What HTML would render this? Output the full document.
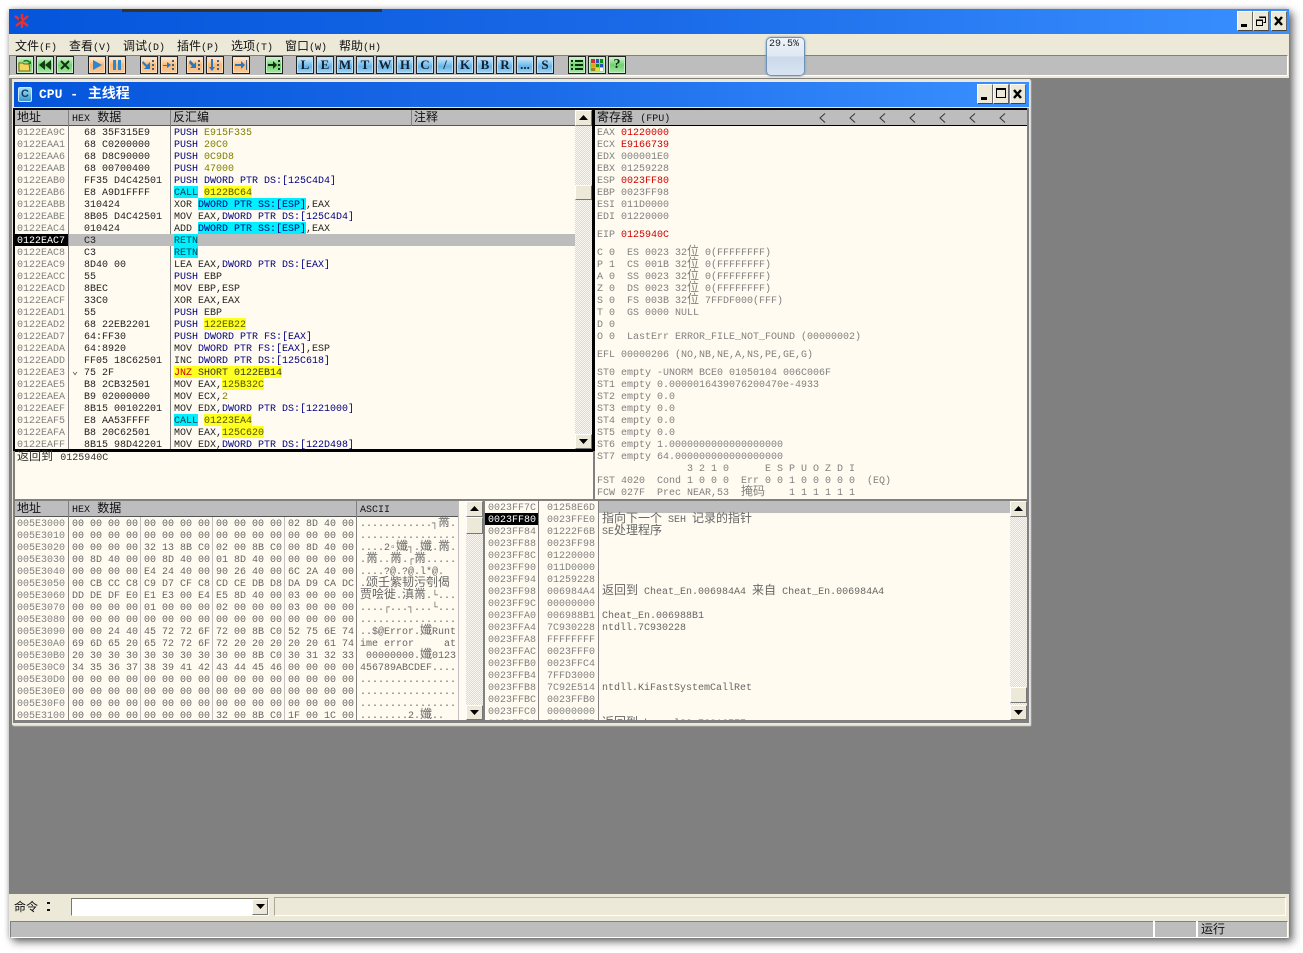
<!DOCTYPE html>
<html><head><meta charset="utf-8"><title>CPU</title>
<style>
html,body{margin:0;padding:0;width:1303px;height:953px;overflow:hidden;background:#fff}
div,pre,svg{position:absolute;margin:0;padding:0}
pre,.t{font:10px/12px "Liberation Mono",monospace;white-space:pre;color:#333}
pre{padding-top:2px}
i{font:normal 12px/0 "Noto Sans CJK SC","WenQuanYi Zen Hei",sans-serif;letter-spacing:0}
.m{font:12px/14px "Noto Sans CJK SC","WenQuanYi Zen Hei",sans-serif;color:#111;white-space:pre}
.m u{font:10px/12px "Liberation Mono",monospace;text-decoration:none}
.h{background:#bdbdbd;height:15px;border-bottom:1px solid #555;box-sizing:content-box}
.ht{font:12px/15px "Liberation Mono","Noto Sans CJK SC",monospace;color:#111;white-space:pre}
.ht b{font:normal 10px/15px "Liberation Mono",monospace}
.v{width:1px;background:#808080}
.g{color:#808080}
.n{color:#000080}
.o{color:#808000}
.r{color:#d00000}
.c{background:#00f0ff;color:#004050;display:inline-block;height:10px;box-shadow:0 -2px 0 #00f0ff}
.y{background:#ffff20;display:inline-block;height:10px;box-shadow:0 -2px 0 #ffff20}
.cn{background:#00f0ff;color:#000080;display:inline-block;height:10px;box-shadow:0 -2px 0 #00f0ff}
.sb{width:16px;background:#ece9d8;border:1px solid;border-color:#fff #777 #777 #fff;box-sizing:border-box}
.tr{background:repeating-conic-gradient(#f8f6ee 0 25%,#dedcd0 0 50%) 0 0/2px 2px}
.w{width:16px;height:20px;background:#ece9d8;border:1px solid;border-color:#fff #666 #444 #fff;box-sizing:border-box}
.tb{width:18px;height:18px;box-sizing:border-box;border:1px solid #222;top:56px}
.to{background:linear-gradient(#fff0e0,#f8b878 50%,#f8c898);box-shadow:inset 0 0 0 1px #fbdcbc}
.tg{background:linear-gradient(#d8f8d8,#70d070 50%,#a8e8a8);box-shadow:inset 0 0 0 1px #c8f0c8}
.tl{background:linear-gradient(#d8effc,#68b4e8 60%,#a0d4f4);box-shadow:inset 0 0 0 1px #b8e0f8;font:bold 13px/16px "Liberation Serif",serif;color:#123;text-align:center}
.tb svg{left:0;top:0}
</style></head><body>

<!-- main window -->
<div style="left:9px;top:9px;width:1280px;height:929px;background:#ece9d8;box-shadow:4px 4px 8px rgba(0,0,0,.55),0 0 5px rgba(0,0,0,.25)"></div>
<div style="left:9px;top:9px;width:1280px;height:25px;background:linear-gradient(90deg,#0555dc,#1a6ae8 50%,#3a90ff)"></div>
<div style="left:122px;top:9px;width:260px;height:3px;background:#333"></div>
<svg style="left:13px;top:13px" width="18" height="17" viewBox="0 0 18 17"><g stroke="#e83030" stroke-width="2.4" fill="none"><path d="M9 1V15M2 3L15 13M15 3L3 13"/></g><path d="M6 5l3 2-3 2z" fill="#444"/></svg>

<div class="w" style="left:1237px;top:11px"><div style="left:3px;top:12px;width:6px;height:3px;background:#000"></div></div>
<div class="w" style="left:1253px;top:11px"><svg style="left:1px;top:2px" width="12" height="14"><path d="M4.5 3.5h6v5h-2M1.5 6.5h6v5h-6z" fill="none" stroke="#000"/><path d="M4 3h7M1 6h7" stroke="#000" stroke-width="1"/></svg></div>
<div class="w" style="left:1271px;top:11px"><svg style="left:2px;top:4px" width="10" height="10"><path d="M1 1L8 9M8 1L1 9" stroke="#000" stroke-width="2.4"/></svg></div>

<!-- menu -->
<div class="m" style="left:15px;top:39px">文件<u>(F)</u></div>
<div class="m" style="left:69px;top:39px">查看<u>(V)</u></div>
<div class="m" style="left:123px;top:39px">调试<u>(D)</u></div>
<div class="m" style="left:177px;top:39px">插件<u>(P)</u></div>
<div class="m" style="left:231px;top:39px">选项<u>(T)</u></div>
<div class="m" style="left:285px;top:39px">窗口<u>(W)</u></div>
<div class="m" style="left:339px;top:39px">帮助<u>(H)</u></div>

<!-- toolbar -->
<div style="left:9px;top:55px;width:1279px;height:21px;background:#bdbdbd;border-top:1px solid #808080;border-bottom:1px solid #fff;box-sizing:border-box;border-right:1px solid #fff;border-left:1px solid #808080"></div>

<div class="tb tg" style="left:16px"><svg width="16" height="16"><path d="M2 6h4l1 1h5l1 7H2z" fill="#f0d860" stroke="#806810"/><path d="M6 4a4 3 0 0 1 7 1l1-2v4h-4l2-1a3 2 0 0 0-5-1z" fill="#108010"/></svg></div>
<div class="tb tg" style="left:36px"><svg width="16" height="16"><path d="M8 3v10L2 8zM14 3v10L8 8z" fill="#104010"/></svg></div>
<div class="tb tg" style="left:56px"><svg width="16" height="16"><path d="M4 4l8 8M12 4l-8 8" stroke="#103010" stroke-width="2"/></svg></div>

<div class="tb to" style="left:88px"><svg width="16" height="16"><path d="M4 3l9 5-9 5z" fill="#2a88d0"/></svg></div>
<div class="tb to" style="left:108px"><svg width="16" height="16"><path d="M4 3h3v10H4zM9 3h3v10H9z" fill="#2a88d0"/></svg></div>

<div class="tb to" style="left:140px"><svg width="16" height="16"><path d="M2 4l4 4 3-3v7H3l2-2-4-4z" fill="#2a78c0"/><path d="M11 3h2v2h-2zM11 7h2v2h-2zM11 11h2v2h-2z" fill="#406080"/></svg></div>
<div class="tb to" style="left:160px"><svg width="16" height="16"><path d="M2 8h4V5l4 3-4 3V9H2z" fill="#2a78c0"/><path d="M11 3h2v2h-2zM11 7h2v2h-2zM11 11h2v2h-2z" fill="#406080"/></svg></div>
<div class="tb to" style="left:186px"><svg width="16" height="16"><path d="M3 3l4 4 2-2v6H3l2-2-3-3z" fill="#2a78c0"/><path d="M11 3h2v2h-2zM11 7h2v2h-2zM11 11h2v2h-2z" fill="#406080"/></svg></div>
<div class="tb to" style="left:206px"><svg width="16" height="16"><path d="M4 2h2v8h2l-3 4-3-4h2z" fill="#2a78c0"/><path d="M10 3h2v2h-2zM10 7h2v2h-2zM10 11h2v2h-2z" fill="#406080"/></svg></div>
<div class="tb to" style="left:232px"><svg width="16" height="16"><path d="M2 7h6V4l4 4-4 4V9H2z" fill="#2a78c0"/><path d="M13 3h1v10h-1z" fill="#406080"/></svg></div>
<div class="tb tg" style="left:265px"><svg width="16" height="16"><path d="M2 7h5V4l4 4-4 4V9H2z" fill="#103010"/><path d="M12 3h2v2h-2zM12 7h2v2h-2zM12 11h2v2h-2z" fill="#103010"/></svg></div>

<div class="tb tl" style="left:296px">L</div>
<div class="tb tl" style="left:316px">E</div>
<div class="tb tl" style="left:336px">M</div>
<div class="tb tl" style="left:356px">T</div>
<div class="tb tl" style="left:376px">W</div>
<div class="tb tl" style="left:396px">H</div>
<div class="tb tl" style="left:416px">C</div>
<div class="tb tl" style="left:436px">/</div>
<div class="tb tl" style="left:456px">K</div>
<div class="tb tl" style="left:476px">B</div>
<div class="tb tl" style="left:496px">R</div>
<div class="tb tl" style="left:516px">...</div>
<div class="tb tl" style="left:536px">S</div>

<div class="tb tg" style="left:568px"><svg width="16" height="16"><path d="M2 3h2v2H2zM2 7h2v2H2zM2 11h2v2H2zM6 3h8v2H6zM6 7h8v2H6zM6 11h8v2H6z" fill="#083008"/></svg></div>
<div class="tb tg" style="left:588px"><svg width="16" height="16"><path d="M2 2h4v4H2z" fill="#d03030"/><path d="M7 2h3v4H7z" fill="#3050c0"/><path d="M11 2h3v4h-3z" fill="#109010"/><path d="M2 7h4v3H2z" fill="#e0a020"/><path d="M7 7h3v3H7z" fill="#109010"/><path d="M11 7h3v3h-3z" fill="#3050c0"/><path d="M2 11h4v3H2z" fill="#a08020"/><path d="M7 11h3v3H7z" fill="#e0e040"/><path d="M11 11h3v3h-3z" fill="#fff"/></svg></div>
<div class="tb tg" style="left:608px;font:bold 14px/16px 'Liberation Serif',serif;color:#083008;text-align:center">?</div>

<!-- MDI area -->
<div style="left:9px;top:78px;width:1280px;height:816px;background:#808080"></div>

<!-- tooltip -->
<div style="left:766px;top:37px;width:39px;height:39px;box-sizing:border-box;border:1px solid #6f93b8;border-radius:5px;background:linear-gradient(#eef3fa 0,#dfe8f3 48%,#cbd9ea 52%,#d8e4f2 100%);box-shadow:0 0 2px #6f93b8"></div>
<div class="t" style="left:769px;top:39px;color:#222">29.5%</div>

<!-- CPU child -->
<div style="left:12px;top:79px;width:1018px;height:646px;background:#ece9d8;box-shadow:1px 1px 1px #eee"></div>
<div style="left:14px;top:82px;width:1015px;height:25px;background:linear-gradient(90deg,#0555dc,#1a6ae8 50%,#3a90ff)"></div>
<div style="left:18px;top:87px;width:14px;height:15px;background:linear-gradient(#a8e0f0,#3a98c8);border:1px solid #cfeaf6;box-sizing:border-box;font:bold 11px/13px 'Liberation Sans',sans-serif;color:#0a3a70;text-align:center;border-radius:2px">C</div>
<div style="left:39px;top:86px;font:bold 13px/18px 'Liberation Mono',monospace;color:#fff;white-space:pre">CPU - <i style="font:bold 14px/0 'Noto Sans CJK SC',sans-serif;margin-left:2px">主线程</i></div>
<div class="w" style="left:977px;top:84px"><div style="left:3px;top:12px;width:6px;height:3px;background:#000"></div></div>
<div class="w" style="left:993px;top:84px"><div style="left:2px;top:3px;width:10px;height:10px;border:1px solid #000;border-top-width:2px;box-sizing:border-box"></div></div>
<div class="w" style="left:1010px;top:84px"><svg style="left:2px;top:4px" width="10" height="10"><path d="M1 1L8 9M8 1L1 9" stroke="#000" stroke-width="2.4"/></svg></div>

<!-- panes bg -->
<div style="left:13px;top:108px;width:1016px;height:393px;background:#000"></div>
<div style="left:15px;top:110px;width:577px;height:339px;background:#fffbf0"></div>
<div style="left:15px;top:452px;width:578px;height:47px;background:#fffbf0"></div>
<div style="left:595px;top:110px;width:432px;height:389px;background:#fffbf0"></div>
<div style="left:593px;top:451px;width:2px;height:49px;background:#808080"></div>
<div style="left:13px;top:451px;width:2px;height:49px;background:#808080"></div>
<div style="left:1027px;top:108px;width:2px;height:392px;background:#808080"></div>
<div style="left:13px;top:499px;width:1016px;height:2px;background:#808080"></div>

<!-- disasm header -->
<div class="h" style="left:15px;top:110px;width:560px"></div>
<div class="ht" style="left:17px;top:111px">地址</div>
<div class="ht" style="left:72px;top:111px"><b>HEX</b> 数据</div>
<div class="ht" style="left:173px;top:111px">反汇编</div>
<div class="ht" style="left:414px;top:111px">注释</div>
<div class="v" style="left:68px;top:110px;height:339px"></div>
<div class="v" style="left:170px;top:110px;height:339px"></div>
<div class="v" style="left:411px;top:110px;height:16px"></div>
<!-- disasm highlight row -->
<div style="left:69px;top:234px;width:506px;height:12px;background:#bdbdbd"></div>
<div style="left:15px;top:234px;width:53px;height:12px;background:#000"></div>

<pre class="g" style="left:17px;top:126px">0122EA9C
0122EAA1
0122EAA6
0122EAAB
0122EAB0
0122EAB6
0122EABB
0122EABE
0122EAC4
<span style="color:#fff">0122EAC7</span>
0122EAC8
0122EAC9
0122EACC
0122EACD
0122EACF
0122EAD1
0122EAD2
0122EAD7
0122EADA
0122EADD
0122EAE3
0122EAE5
0122EAEA
0122EAEF
0122EAF5
0122EAFA
0122EAFF</pre>
<pre style="left:84px;top:126px;color:#222">68 35F315E9
68 C0200000
68 D8C90000
68 00700400
FF35 D4C42501
E8 A9D1FFFF
310424
8B05 D4C42501
010424
C3
C3
8D40 00
55
8BEC
33C0
55
68 22EB2201
64:FF30
64:8920
FF05 18C62501
75 2F
B8 2CB32501
B9 02000000
8B15 00102201
E8 AA53FFFF
B8 20C62501
8B15 98D42201</pre>
<div class="t" style="left:72px;top:367px;color:#444">⌄</div>
<pre style="left:174px;top:126px;color:#222"><span class="n">PUSH</span> <span class="o">E915F335</span>
<span class="n">PUSH</span> <span class="o">20C0</span>
<span class="n">PUSH</span> <span class="o">0C9D8</span>
<span class="n">PUSH</span> <span class="o">47000</span>
<span class="n">PUSH DWORD PTR DS:[125C4D4]</span>
<span class="c">CALL</span> <span class="y" style="color:#555500">0122BC64</span>
XOR <span class="cn">DWORD PTR SS:[ESP]</span>,EAX
MOV EAX,<span class="n">DWORD PTR DS:[125C4D4]</span>
ADD <span class="cn">DWORD PTR SS:[ESP]</span>,EAX
<span class="c">RETN</span>
<span class="c">RETN</span>
LEA EAX,<span class="n">DWORD PTR DS:[EAX]</span>
<span class="n">PUSH</span> EBP
MOV EBP,ESP
XOR EAX,EAX
<span class="n">PUSH</span> EBP
<span class="n">PUSH</span> <span class="y" style="color:#555500">122EB22</span>
<span class="n">PUSH DWORD PTR FS:[EAX]</span>
MOV <span class="n">DWORD PTR FS:[EAX]</span>,ESP
INC <span class="n">DWORD PTR DS:[125C618]</span>
<span class="y" style="color:#d00000">JNZ</span><span class="y"> </span><span class="y" style="color:#333">SHORT 0122EB14</span>
MOV EAX,<span class="y" style="color:#555500">125B32C</span>
MOV ECX,<span class="o">2</span>
MOV EDX,<span class="n">DWORD PTR DS:[1221000]</span>
<span class="c">CALL</span> <span class="y" style="color:#555500">01223EA4</span>
MOV EAX,<span class="y" style="color:#555500">125C620</span>
MOV EDX,<span class="n">DWORD PTR DS:[122D498]</span></pre>

<!-- disasm scrollbar -->
<div class="tr" style="left:575px;top:110px;width:17px;height:339px"></div>
<div class="sb" style="left:575px;top:110px;height:16px;width:17px"><svg style="left:3px;top:4px" width="9" height="6"><path d="M4.5 0L9 5H0z" fill="#000"/></svg></div>
<div class="sb" style="left:575px;top:185px;height:15px;width:17px"></div>
<div class="sb" style="left:575px;top:434px;height:15px;width:17px"><svg style="left:3px;top:4px" width="9" height="6"><path d="M4.5 5L9 0H0z" fill="#000"/></svg></div>

<!-- info -->
<div class="ht" style="left:17px;top:450px;color:#333">返回到 <b>0125940C</b></div>

<!-- registers -->
<div class="h" style="left:595px;top:110px;width:432px;border-bottom:1px solid #000"></div>
<div class="ht" style="left:597px;top:111px">寄存器 <b>(FPU)</b></div>
<svg style="left:815px;top:112px" width="200" height="12" fill="none" stroke="#333"><path d="M10 1.5L5 6l5 4.5M40 1.5L35 6l5 4.5M70 1.5L65 6l5 4.5M100 1.5L95 6l5 4.5M130 1.5L125 6l5 4.5M160 1.5L155 6l5 4.5M190 1.5L185 6l5 4.5"/></svg>

<pre class="g" style="left:597px;top:126px">EAX <span class="r">01220000</span>
ECX <span class="r">E9166739</span>
EDX 000001E0
EBX 01259228
ESP <span class="r">0023FF80</span>
EBP 0023FF98
ESI 011D0000
EDI 01220000</pre>
<pre class="g" style="left:597px;top:228px">EIP <span class="r">0125940C</span></pre>
<pre class="g" style="left:597px;top:246px">C 0  ES 0023 32<i>位</i> 0(FFFFFFFF)
P 1  CS 001B 32<i>位</i> 0(FFFFFFFF)
A 0  SS 0023 32<i>位</i> 0(FFFFFFFF)
Z 0  DS 0023 32<i>位</i> 0(FFFFFFFF)
S 0  FS 003B 32<i>位</i> 7FFDF000(FFF)
T 0  GS 0000 NULL
D 0
O 0  LastErr ERROR_FILE_NOT_FOUND (00000002)</pre>
<pre class="g" style="left:597px;top:348px">EFL 00000206 (NO,NB,NE,A,NS,PE,GE,G)</pre>
<pre class="g" style="left:597px;top:366px">ST0 empty -UNORM BCE0 01050104 006C006F
ST1 empty 0.0000016439076200470e-4933
ST2 empty 0.0
ST3 empty 0.0
ST4 empty 0.0
ST5 empty 0.0
ST6 empty 1.0000000000000000000
ST7 empty 64.000000000000000000
               3 2 1 0      E S P U O Z D I
FST 4020  Cond 1 0 0 0  Err 0 0 1 0 0 0 0 0  (EQ)
FCW 027F  Prec NEAR,53  <i>掩码</i>    1 1 1 1 1 1</pre>

<!-- bottom panes -->
<div style="left:13px;top:501px;width:1016px;height:222px;background:#808080"></div>
<div style="left:15px;top:501px;width:468px;height:219px;background:#fffbf0"></div>
<div style="left:485px;top:501px;width:542px;height:219px;background:#fffbf0"></div>

<!-- dump -->
<div class="h" style="left:15px;top:501px;width:443px;height:15px"></div>
<div class="ht" style="left:17px;top:502px">地址</div>
<div class="ht" style="left:72px;top:502px"><b>HEX</b> 数据</div>
<div class="ht" style="left:360px;top:502px"><b>ASCII</b></div>
<div class="v" style="left:68px;top:501px;height:219px"></div>
<div class="v" style="left:140px;top:517px;height:203px;background:#c0c0c0"></div>
<div class="v" style="left:212px;top:517px;height:203px;background:#c0c0c0"></div>
<div class="v" style="left:284px;top:517px;height:203px;background:#c0c0c0"></div>
<div class="v" style="left:356px;top:501px;height:219px"></div>
<div class="v" style="left:458px;top:501px;height:219px;background:#c0c0c0"></div>

<pre class="g" style="left:17px;top:517px">005E3000
005E3010
005E3020
005E3030
005E3040
005E3050
005E3060
005E3070
005E3080
005E3090
005E30A0
005E30B0
005E30C0
005E30D0
005E30E0
005E30F0
005E3100</pre>
<pre style="left:72px;top:517px;color:#666">00 00 00 00 00 00 00 00 00 00 00 00 02 8D 40 00
00 00 00 00 00 00 00 00 00 00 00 00 00 00 00 00
00 00 00 00 32 13 8B C0 02 00 8B C0 00 8D 40 00
00 8D 40 00 00 8D 40 00 01 8D 40 00 00 00 00 00
00 00 00 00 E4 24 40 00 90 26 40 00 6C 2A 40 00
00 CB CC C8 C9 D7 CF C8 CD CE DB D8 DA D9 CA DC
DD DE DF E0 E1 E3 00 E4 E5 8D 40 00 03 00 00 00
00 00 00 00 01 00 00 00 02 00 00 00 03 00 00 00
00 00 00 00 00 00 00 00 00 00 00 00 00 00 00 00
00 00 24 40 45 72 72 6F 72 00 8B C0 52 75 6E 74
69 6D 65 20 65 72 72 6F 72 20 20 20 20 20 61 74
20 30 30 30 30 30 30 30 30 00 8B C0 30 31 32 33
34 35 36 37 38 39 41 42 43 44 45 46 00 00 00 00
00 00 00 00 00 00 00 00 00 00 00 00 00 00 00 00
00 00 00 00 00 00 00 00 00 00 00 00 00 00 00 00
00 00 00 00 00 00 00 00 00 00 00 00 00 00 00 00
00 00 00 00 00 00 00 00 32 00 8B C0 1F 00 1C 00</pre>
<pre style="left:360px;top:517px;color:#666">............┐<i>黹</i>.
................
....2▫<i>孅</i>┐.<i>孅</i>.<i>黹</i>.
.<i>黹</i>..<i>黹</i>.┌<i>黹</i>.....
....?@.?@.l*@.
.<i>颂壬紫韧污刳偈</i>
<i>贾哙徙</i>.<i>滇黹</i>.└...
....┌...┐...└...
................
..$@Error.<i>孅</i>Runt
ime error     at
 00000000.<i>孅</i>0123
456789ABCDEF....
................
................
................
........2.<i>孅</i>..</pre>

<!-- dump scrollbar -->
<div class="tr" style="left:466px;top:501px;width:17px;height:219px"></div>
<div class="sb" style="left:466px;top:501px;height:16px;width:17px"><svg style="left:3px;top:4px" width="9" height="6"><path d="M4.5 0L9 5H0z" fill="#000"/></svg></div>
<div class="sb" style="left:466px;top:517px;height:17px;width:17px"></div>
<div class="sb" style="left:466px;top:705px;height:15px;width:17px"><svg style="left:3px;top:4px" width="9" height="6"><path d="M4.5 5L9 0H0z" fill="#000"/></svg></div>

<!-- stack -->
<div style="left:598px;top:501px;width:412px;height:12px;background:#bdbdbd"></div>
<div style="left:485px;top:513px;width:53px;height:12px;background:#000"></div>
<div class="v" style="left:538px;top:501px;height:219px"></div>
<div class="v" style="left:598px;top:501px;height:219px"></div>
<div style="left:485px;top:501px;width:542px;height:219px;overflow:hidden">
<pre class="g" style="left:3px;top:0">0023FF7C
<span style="color:#fff">0023FF80</span>
0023FF84
0023FF88
0023FF8C
0023FF90
0023FF94
0023FF98
0023FF9C
0023FFA0
0023FFA4
0023FFA8
0023FFAC
0023FFB0
0023FFB4
0023FFB8
0023FFBC
0023FFC0
0023FFC4</pre>
<pre class="g" style="left:62px;top:0">01258E6D
0023FFE0
01222F6B
0023FF98
01220000
011D0000
01259228
006984A4
00000000
006988B1
7C930228
FFFFFFFF
0023FFF0
0023FFC4
7FFD3000
7C92E514
0023FFB0
00000000
7C816FF7</pre>
<pre class="g" style="left:117px;top:12px;color:#666"><i>指向下一个</i> SEH <i>记录的指针</i>
SE<i>处理程序</i>




<i>返回到</i> Cheat_En.006984A4 <i>来自</i> Cheat_En.006984A4

Cheat_En.006988B1
ntdll.7C930228




ntdll.KiFastSystemCallRet


<i>返回到</i> kernel32.7C816FF7</pre>
</div>

<!-- stack scrollbar -->
<div class="tr" style="left:1010px;top:501px;width:17px;height:219px"></div>
<div class="sb" style="left:1010px;top:501px;height:16px;width:17px"><svg style="left:3px;top:4px" width="9" height="6"><path d="M4.5 0L9 5H0z" fill="#000"/></svg></div>
<div class="sb" style="left:1010px;top:687px;height:16px;width:17px"></div>
<div class="sb" style="left:1010px;top:705px;height:15px;width:17px"><svg style="left:3px;top:4px" width="9" height="6"><path d="M4.5 5L9 0H0z" fill="#000"/></svg></div>

<div style="left:483px;top:501px;width:2px;height:219px;background:#808080"></div>

<!-- command bar -->
<div style="left:9px;top:894px;width:1280px;height:27px;background:#ece9d8"></div>
<div class="m" style="left:14px;top:900px">命令</div>
<div style="left:47px;top:902px;width:3px;height:2px;background:#111"></div>
<div style="left:47px;top:909px;width:3px;height:2px;background:#111"></div>
<div style="left:71px;top:898px;width:198px;height:18px;background:#fff;box-sizing:border-box;border:1px solid;border-color:#7a7868 #fff #fff #7a7868"></div>
<div class="sb" style="left:252px;top:899px;width:16px;height:16px"><svg style="left:3px;top:4px" width="9" height="6"><path d="M4.5 5L9 0H0z" fill="#000"/></svg></div>
<div style="left:274px;top:897px;width:1012px;height:19px;box-sizing:border-box;border:1px solid;border-color:#aca899 #fff #fff #aca899"></div>

<!-- status -->
<div style="left:10px;top:921px;width:1278px;height:17px;background:#bdbdbd;box-sizing:border-box;border:1px solid;border-color:#808080 #fff #fff #808080"></div>
<div style="left:1153px;top:921px;width:2px;height:17px;background:#fff"></div>
<div style="left:1196px;top:921px;width:2px;height:17px;background:#fff"></div>
<div class="m" style="left:1201px;top:922px">运行</div>
</body></html>
